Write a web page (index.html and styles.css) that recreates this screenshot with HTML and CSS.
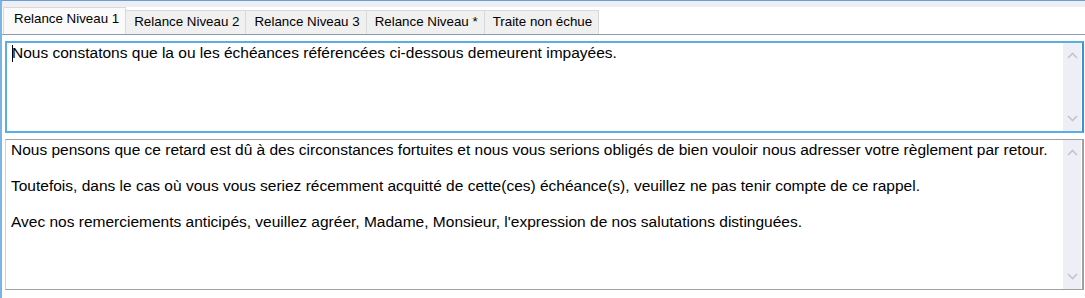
FILE: index.html
```html
<!DOCTYPE html>
<html lang="fr">
<head>
    <meta charset="UTF-8">
    <title>Relances</title>
    <link rel="stylesheet" href="styles.css">
</head>
<body>
    <div class="window">
        <div class="tabstrip">
            <div class="tab active">Relance Niveau 1</div>
            <div class="tab">Relance Niveau 2</div>
            <div class="tab">Relance Niveau 3</div>
            <div class="tab">Relance Niveau *</div>
            <div class="tab">Traite non échue</div>
        </div>
        <div class="panel">
            <div class="textbox focused">
                <div class="content">
                    <p><span class="caret"></span>Nous constatons que la ou les échéances référencées ci-dessous demeurent impayées.</p>
                </div>
                <div class="scrollbar">
                    <svg width="11" height="7" viewBox="0 0 11 7"><path d="M1 6 L5.5 1.5 L10 6" fill="none" stroke="#c4c4cc" stroke-width="1.6"/></svg>
                    <svg width="11" height="7" viewBox="0 0 11 7"><path d="M1 1 L5.5 5.5 L10 1" fill="none" stroke="#c4c4cc" stroke-width="1.6"/></svg>
                </div>
            </div>
            <div class="textbox plain">
                <div class="content">
                    <p>Nous pensons que ce retard est dû à des circonstances fortuites et nous vous serions obligés de bien vouloir nous adresser votre règlement par retour.</p>
                    <p>Toutefois, dans le cas où vous vous seriez récemment acquitté de cette(ces) échéance(s), veuillez ne pas tenir compte de ce rappel.</p>
                    <p>Avec nos remerciements anticipés, veuillez agréer, Madame, Monsieur, l'expression de nos salutations distinguées.</p>
                </div>
                <div class="scrollbar">
                    <svg width="11" height="7" viewBox="0 0 11 7"><path d="M1 6 L5.5 1.5 L10 6" fill="none" stroke="#c4c4cc" stroke-width="1.6"/></svg>
                    <svg width="11" height="7" viewBox="0 0 11 7"><path d="M1 1 L5.5 5.5 L10 1" fill="none" stroke="#c4c4cc" stroke-width="1.6"/></svg>
                </div>
            </div>
        </div>
    </div>
</body>
</html>
```

FILE: styles.css
```css
body { margin: 0; background: #fff; font-family: "Liberation Sans", Arial, sans-serif; font-size: 13.33px; color: #000; }
.window { height: 298px; border-top: 1px solid #6a9fcf; border-left: 2px solid #7ab4e2; box-sizing: border-box; background: linear-gradient(#eeeef6 0, #eeeef6 6px, #fff 6px); }
.tabstrip { display: flex; align-items: flex-end; height: 33px; padding-left: 1px; }
.tab { height: 24px; line-height: 22px; padding: 0 6px 0 8px; background: #f0f0f0; border: 1px solid #d9d9d9; border-bottom: none; box-sizing: border-box; color: #000; white-space: nowrap; }
.tab + .tab { border-left: none; }
.tab.active { height: 27px; line-height: 22px; background: #fafafa; padding: 0 6px 0 10px; }
.panel { border-top: 1px solid #8c9db0; padding: 6px 1px 0 3px; display: flex; flex-direction: column; gap: 6px; }
.textbox { display: flex; background: #fff; }
.textbox .content { flex: 1; padding: 1px 4px 0 5px; font-size: 15.5px; }
.textbox p { margin: 0 0 18px 0; line-height: 18px; }
.focused { height: 92px; border: 2px solid #5aaee2; border-right-color: #3993d6; box-sizing: border-box; }
.plain { height: 151px; border: 1px solid #a0a0a0; border-left-color: #d4d4d4; border-right-width: 2px; box-sizing: border-box; }
.plain .content { padding-top: 1px; }
.scrollbar { width: 18px; background: #eeeef6; display: flex; flex-direction: column; justify-content: space-between; align-items: center; padding: 9px 0 9px 0; margin-right: 1px; }
.caret { display: inline-block; width: 1px; height: 17px; background: #000; vertical-align: -4px; margin-right: -1px; }
```
